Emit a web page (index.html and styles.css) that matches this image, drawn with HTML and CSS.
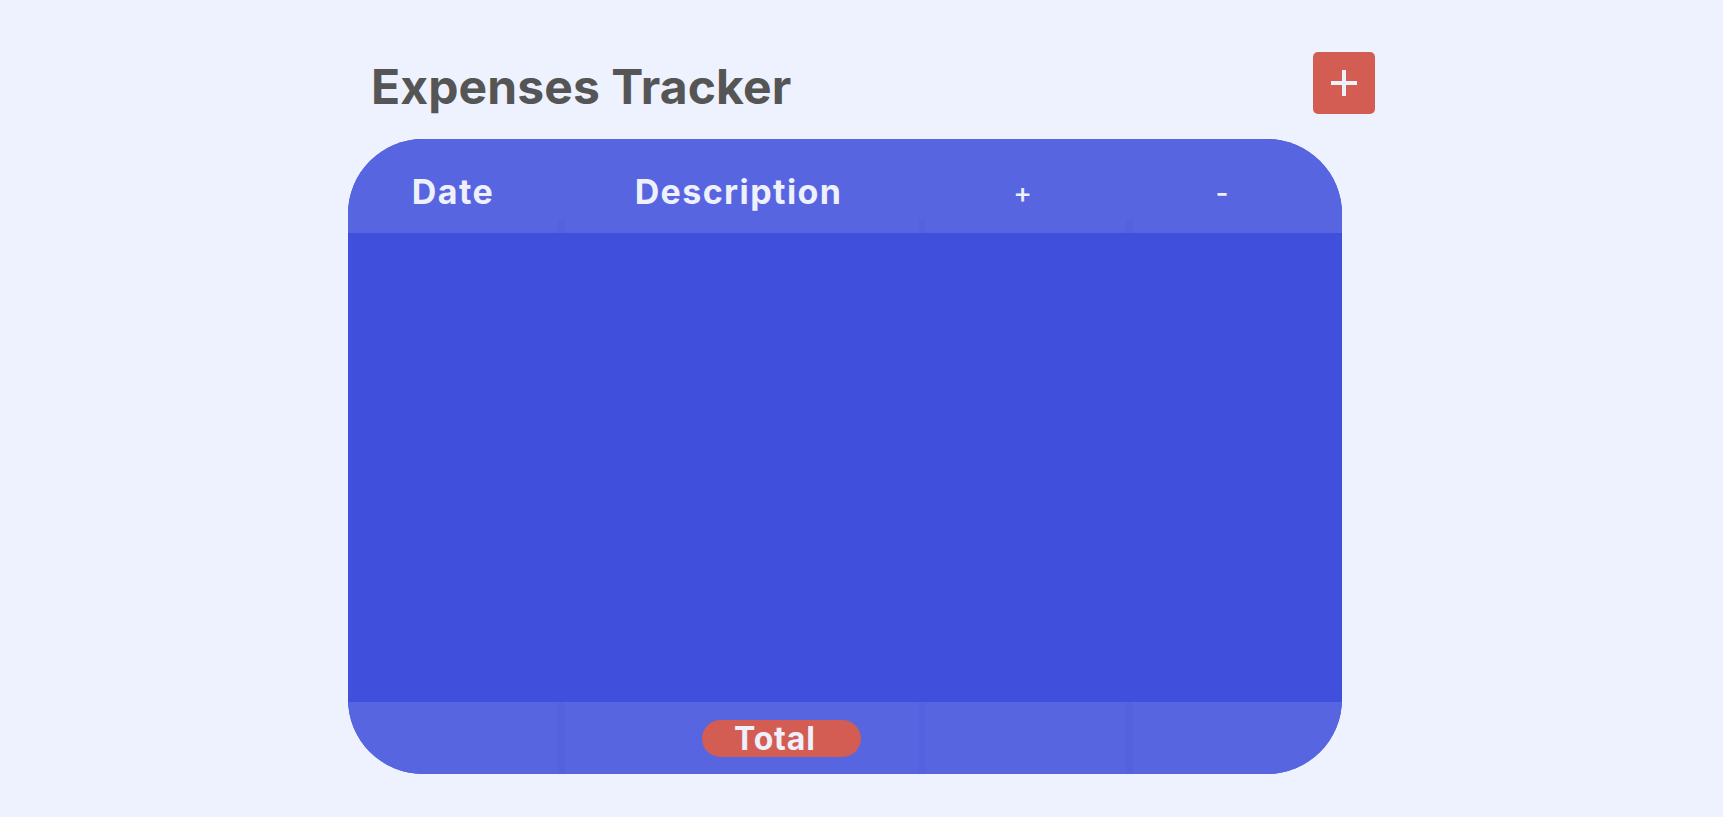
FILE: index.html
```html
<!DOCTYPE html>
<html lang="en">
<head>
<meta charset="utf-8">
<title>Expenses Tracker</title>
<link rel="stylesheet" href="styles.css">
</head>
<body>
<main class="app">
  <header class="topbar">
    <h1 class="title">Expenses Tracker</h1>
    <button class="add-btn" type="button" aria-label="Add expense">
      <svg width="26" height="26" viewBox="0 0 26 26" aria-hidden="true">
        <rect x="11" y="0" width="4" height="26" fill="#eef0fc"/>
        <rect x="0" y="11" width="26" height="4" fill="#eef0fc"/>
      </svg>
    </button>
  </header>
  <section class="table">
    <div class="row head">
      <div class="cell">Date</div>
      <div class="cell div">Description</div>
      <div class="cell div sign">+</div>
      <div class="cell div sign minus">-</div>
    </div>
    <div class="body"></div>
    <div class="row foot">
      <div class="cell"></div>
      <div class="cell div total-cell"><span class="total">Total</span></div>
      <div class="cell div"></div>
      <div class="cell div"></div>
    </div>
  </section>
</main>
</body>
</html>
```

FILE: styles.css
```css
* { box-sizing: border-box; }
html, body { margin: 0; padding: 0; }
body {
  background: #edf2fe;
  font-family: Inter, "Noto Sans", "Liberation Sans", sans-serif;
  width: 1723px;
  height: 817px;
  overflow: hidden;
}
.app {
  width: 1027px;
  margin: 0 auto;
  padding-top: 52px;
}
.topbar {
  display: flex;
  justify-content: space-between;
  align-items: flex-start;
  height: 62px;
}
.title {
  margin: 7px 0 0 23px;
  font-size: 48px;
  line-height: 56px;
  font-weight: 700;
  color: #555555;
  letter-spacing: 0.1px;
}
.add-btn {
  width: 62px;
  height: 62px;
  border: 0;
  border-radius: 5px;
  background: #d35d52;
  display: flex;
  align-items: center;
  justify-content: center;
  padding: 0;
}
.table {
  width: 994px;
  margin-top: 25px;
  border-radius: 75px;
  overflow: hidden;
  background: #4150dc;
}
.row {
  display: grid;
  grid-template-columns: 210px 361px 207px 216px;
}
.head {
  height: 94px;
  background: #5865e0;
  color: #eef0fc;
}
.head .cell {
  padding-top: 33px;
  text-align: center;
  font-size: 34px;
  line-height: 40px;
  font-weight: 700;
  letter-spacing: 1.4px;
}
.head .div {
  background: linear-gradient(#5561df, #5561df) left bottom / 7px 14px no-repeat;
}
.head .sign {
  font-size: 28px;
  font-weight: 500;
  padding-top: 34px;
  letter-spacing: 0;
}
.head .minus { padding-right: 24px; }
.body {
  height: 469px;
  background: #4150dc;
}
.foot {
  height: 72px;
  background: #5865e0;
}
.foot .div {
  background: linear-gradient(#5561df, #5561df) left top / 7px 100% no-repeat;
}
.total-cell {
  padding: 18px 0 0 144px;
}
.total {
  display: inline-block;
  height: 37px;
  padding: 0 45px 0 32px;
  border-radius: 19px;
  background: #d35d52;
  color: #eef0fc;
  font-size: 32px;
  line-height: 37px;
  font-weight: 700;
  letter-spacing: 0.8px;
}
```
